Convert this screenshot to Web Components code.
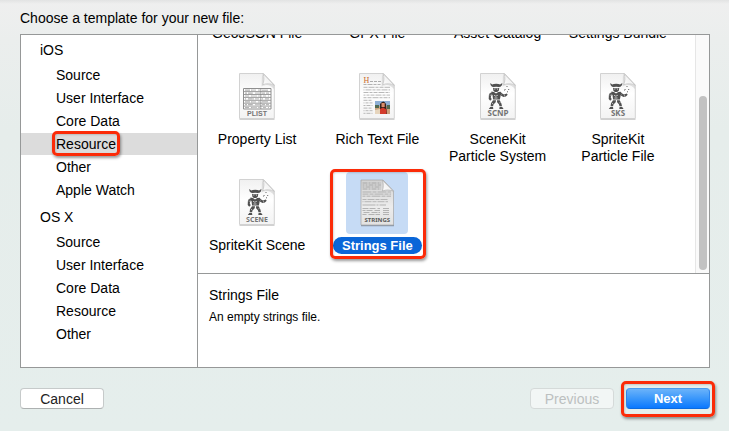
<!DOCTYPE html>
<html lang="en">
<head>
<meta charset="utf-8">
<title>Choose a template</title>
<style>
  html, body { margin: 0; height: 100%; }
  body { font: 14px/16px "Liberation Sans", Arial, sans-serif; color: #000; }
</style>
</head>
<body>
<template-dialog></template-dialog>
<script>
const define = (name, html, setup) => {
  const template = document.createElement('template');
  template.innerHTML = html;
  customElements.define(name, class extends HTMLElement {
    constructor() {
      super();
      this.attachShadow({ mode: 'open' }).append(template.content.cloneNode(true));
    }
    connectedCallback() { if (setup) setup(this, this.shadowRoot); }
  });
};

/* Red callout frame around whatever is slotted in; --reach sets how far it extends. */
define('call-out', `
<style>
  :host { display: inline-block; position: relative; }
  :host::after { content: ""; position: absolute; inset: var(--reach, -4px); border: 3px solid #fb2b08;
    border-radius: 5px; box-shadow: 1px 2px 3px rgba(0,0,0,.4), inset 1px 1px 2px rgba(0,0,0,.15); pointer-events: none; }
</style><slot></slot>`);

define('push-button', `
<style>
  :host { display: block; }
  button { display: block; min-width: 84px; height: 21px; margin: 0; padding: 0 12px; font: inherit; line-height: 18px;
    color: #222; background: #fff; border: 1px solid #c6caca; border-bottom-color: #adb1b1; border-radius: 4px; }
  button:disabled { color: #bcc0c0; background: #f2f6f5; border-color: #d5dad9; }
  :host([primary]) button { color: #fff; font-size: 13px; font-weight: bold; background: linear-gradient(#6bb3fa, #3a97fb 50%, #0a78ff); border-color: #4b9bee #2c85ee #0b6be0; }
</style>
<button type="button"><slot></slot></button>`, (host, root) => {
  root.querySelector('button').disabled = host.hasAttribute('disabled');
});

define('side-group', `
<style>
  :host { display: flex; flex-direction: column; gap: 3px; }
  h2 { margin: 0; padding-left: 19px; font: inherit; line-height: 22px; }
  nav { display: flex; flex-direction: column; gap: 1px; }
</style>
<h2></h2><nav><slot></slot></nav>`, (host, root) => {
  root.querySelector('h2').textContent = host.getAttribute('heading');
});

define('side-item', `
<style>
  :host { display: block; padding-left: 35px; line-height: 22px; }
  :host([selected]) { background: #dcdcdc; }
  a { color: inherit; text-decoration: none; }
</style>
<a href="#"><slot></slot></a>`);

const defs = `<defs>
  <linearGradient id="paper" x1="0" y1="0" x2="0" y2="1"><stop offset="0" stop-color="#f0f0f0"/><stop offset=".45" stop-color="#fff"/><stop offset="1" stop-color="#f3f3f3"/></linearGradient>
  <linearGradient id="fold" x1="0" y1="1" x2="1" y2="0"><stop offset="0" stop-color="#fff"/><stop offset=".5" stop-color="#f2f2f2"/><stop offset="1" stop-color="#ccc"/></linearGradient>
  <linearGradient id="grey" x1="0" y1="0" x2="0" y2="1"><stop offset="0" stop-color="#d2d2d2"/><stop offset=".6" stop-color="#ececec"/><stop offset="1" stop-color="#e2e2e2"/></linearGradient>
</defs>`;
const page = () => `
  <path d="M9.5 54.4H44.5" stroke="#000" stroke-opacity=".18" stroke-width="1.4"/>
  <path d="M9.5 8.5H33.500L44.300 20V53.500H9.500Z" fill="url(#paper)" stroke="#d2d2d2"/>
  <path d="M32 9C34 12 34 17 32.500 20.500C36 18.500 40 18.500 44 20.500L44 24C40 19.500 36 19 31.500 21.500Z" fill="#000" opacity=".1"/>
  <path d="M33 8.500C34.300 12 34.200 16.500 32.600 19.800C36 18.300 40.500 18.500 44.300 20.300Z" fill="url(#fold)" stroke="#c2c2c2" stroke-width=".8"/>`;
const caption = (text, size = 7, family = "'Noto Sans'") =>
  `<text x="27" y="51" text-anchor="middle" font-family="${family}, sans-serif" font-size="${size}" font-weight="700" fill="#747474">${text}</text>`;
const robot = `
  <g fill="#505050">
    <path d="M19.300 18l1.900 1.600q1.300-.9 4-.9t3.900.7l2.200-1.400q.4 2.600-1.800 3.700l-1.700.4q-2.700-.9-5 0l-1.800-.4q-2-1.200-1.700-3.700z"/>
    <path d="M22 22.700l1.500.6h3.400l1.400-.6-.5 3-1.600 1.300h-2.300l-1.500-1.300z"/>
    <path d="M20.500 26.500l2.500.5 2 1.500 2.200-1.500 2.400-.3 1.600 2-1.500 1.500-.8 4.300h-6.800l-.6-4.500-1.600-1z"/>
    <path d="M19.200 27.500l1.500 2-1 2.800 1 2-1.500 1.500-1.500-1.700.2-4.300z"/>
    <path d="M30.700 28.300l2.300 1.200 2.800-.9.900 1.100-1.800 1.900-2.200.4-2.700-1.300z"/>
    <path d="M22 35.200h3l-.3 2-2.200 2.300-.4 1.800h-2.500l.4-3z"/>
    <path d="M26 35.200h2.700l1.700 3.300.6 2.800h-2.500l-.6-2-1.800-2z"/>
    <path d="M19.300 42l2.700.1.300 1.900h-4.500zM28.600 42h2.600l1.400 2h-4.300z"/>
  </g>
  <path d="M23.300 24.200h1M26 24.200h1M23 30.300l1.800.9 2-.9M23.500 33h3M21 38.300l1.200.6M28.500 37.800l1-.5M18.600 30l1 .3M33 30.700l1 .2" stroke="#e2e2e2" stroke-width=".8"/>
  <path d="M33.500 25.500l.8-1.500M35.500 21.500h1M37.200 24.500h1M36 27l1-.4" stroke="#666" stroke-width="1"/>`;
const lines = (x1, x2, y, n, step, attrs) =>
  Array.from({ length: n }, (_, i) => `<path d="M${x1} ${y + i * step}H${x2}" ${attrs} stroke-dashoffset="${i * 3}"/>`).join('');
const art = {
  none: '',
  plist: page() + `<path d="M13.500 23.500H41V44H13.500Z" fill="#fff" stroke="#8f8f8f"/>` +
    lines(15, 22, 25.200, 7, 2.9, 'stroke="#b5b5b5" stroke-width="1.200" stroke-dasharray="5 1 4 2"') +
    lines(22, 30, 25.200, 7, 2.9, 'stroke="#c6c6c6" stroke-width="1.200" stroke-dasharray="4 2 5 1"') +
    lines(32, 39, 25.200, 7, 2.9, 'stroke="#bbb" stroke-width="1.200" stroke-dasharray="6 1 3 2"') +
    lines(14, 41, 26.600, 6, 2.9, 'stroke="#929292" stroke-width=".9"') +
    `<path d="M30.800 23.500V44" stroke="#888" stroke-width=".8"/>` + caption('PLIST', 7, "'Liberation Sans'"),
  rtf: page() + `<text x="13.500" y="17.500" font-family="'Liberation Serif', serif" font-size="8" fill="#c96b2c">H</text>
    <path d="M20 16.500H31" stroke="#999" stroke-width=".8" stroke-dasharray="3 1"/>` +
    lines(13.5, 30.5, 19.500, 1, 2, 'stroke="#aaa" stroke-width=".9" stroke-dasharray="3 1 5 1"') +
    lines(13.5, 40, 22.300, 5, 2.6, 'stroke="#b0b0b0" stroke-width=".9" stroke-dasharray="4 1 6 1 3 1"') +
    lines(13.5, 22.5, 35.300, 6, 2.6, 'stroke="#b0b0b0" stroke-width=".9" stroke-dasharray="4 1 3 1"') + `
    <path d="M25 36H40V49H25Z" fill="#cba27e"/><path d="M25 36H40V41H25Z" fill="#8eafd5"/><path d="M25 40h4v3h-4zM37 40h3v4h-3z" fill="#506a51"/>
    <path d="M30 39q3.500-5 6 0l1 10h-7z" fill="#35231f"/><path d="M31.500 38h3.200v4h-3.200z" fill="#d98d6c"/><path d="M30 44l3-1.500 3.500 2v4.500H30z" fill="#d33b2b"/><path d="M25 45l5-1v5h-5z" fill="#e6d5bd"/>`,
  scnp: page() + robot + caption('SCNP', 8),
  sks: page() + robot + caption('SKS', 8),
  scene: page() + robot + caption('SCENE'),
  strings: `<path d="M11 54.500H44" stroke="#000" stroke-opacity=".3" stroke-width="1.300"/>
    <path d="M11 9H33L43.500 20V54H11Z" fill="url(#grey)" stroke="#a5a5a5" stroke-width=".7"/>` +
    lines(12.5, 31, 12, 4, 2, 'stroke="#999" stroke-width=".8" stroke-dasharray="5 1 2 1"') +
    lines(12.5, 41, 21, 3, 2.100, 'stroke="#a5a5a5" stroke-width=".8" stroke-dasharray="9 1 4 1"') +
    lines(12.5, 38, 28.500, 2, 2.200, 'stroke="#aaa" stroke-width=".8" stroke-dasharray="4 1 7 1"') +
    lines(12.5, 36, 34, 1, 2, 'stroke="#a5a5a5" stroke-width=".8" stroke-dasharray="13 1 2 1"') +
    lines(12.5, 30, 37.500, 4, 2, 'stroke="#a5a5a5" stroke-width=".8" stroke-dasharray="6 1 6 2"') +
    lines(33, 39, 37.500, 4, 2, 'stroke="#a5a5a5" stroke-width=".8"') +
    `<path d="M32.500 9.200C33.500 13 33.500 16.500 32.400 20C36 18.500 40 18.800 43.500 20.200Z" fill="url(#fold)" stroke="#aaa" stroke-width=".7"/>
    <text x="27.300" y="51" text-anchor="middle" font-family="'Noto Sans', sans-serif" font-size="6" font-weight="700" fill="#5a5a5a">STRINGS</text>`
};

define('template-tile', `
<style>
  :host { display: flex; flex-direction: column; align-items: center; gap: 3px; text-align: center; }
  figure { margin: 0; width: 62px; height: 62px; border-radius: 4px; }
  svg { display: block; width: 100%; height: 100%; }
  span { display: block; padding: 0 9px; border-radius: 9px; line-height: 17px; margin-bottom: -1px; white-space: nowrap; }
  ::slotted(b) { display: block; font-weight: inherit; line-height: 16px; }
  :host([selected]) figure { background: #c6dbf5; }
  :host([selected]) span { color: #fff; background: #0a66d8; font-size: 13px; font-weight: bold; }
</style>
<figure></figure><span><slot></slot></span>`, (host, root) => {
  root.querySelector('figure').innerHTML =
    `<svg viewBox="-4 1 62 62" fill="none" aria-hidden="true">${defs}${art[host.getAttribute('icon')]}</svg>`;
});

define('template-grid', `
<style>
  :host { display: flex; min-height: 0; overflow: hidden; background: #fff; }
  .view { flex: 1; min-width: 0; display: flex; flex-direction: column; justify-content: flex-end; }
  .grid { display: grid; grid-template-columns: repeat(4, 1fr); grid-auto-rows: 99px; gap: 7px 2px; padding-right: 18px; padding-bottom: 2px; }
  .track { width: 13px; display: flex; flex-direction: column; align-items: center; background: #fafafa; border-left: 1px solid #e6e6e6; }
  .space { flex: 61; }
  .thumb { flex: 174; width: 8px; margin-bottom: 3px; border-radius: 4px; background: #c2c2c2; }
</style>
<div class="view"><div class="grid"><slot></slot></div></div>
<div class="track"><div class="space"></div><div class="thumb"></div></div>`);

define('template-dialog', `
<style>
  :host { display: flex; flex-direction: column; box-sizing: border-box; min-height: 100vh; padding: 10px 19px 22px 20px;
    background: linear-gradient(#e2e3e3, transparent 4px), linear-gradient(#efefef, #ebeeed 40px, #e6edeb 130px, #e5eeec); }
  h1 { margin: 0 0 8px; font: inherit; }
  .panel { flex: 1; display: grid; grid-template-columns: 177px 1fr; border: 1px solid #969898; background: #fff; }
  aside { display: flex; flex-direction: column; gap: 5px; padding-top: 4px; border-right: 1px solid #969898; }
  .main { display: grid; grid-template-rows: minmax(0, 238px) 1fr; min-width: 0; }
  .detail { padding: 13px 11px; border-top: 1px solid #969898; }
  h2 { margin: 0 0 6px; font: inherit; }
  p { margin: 0; font-size: 12px; }
  footer { display: flex; gap: 12px; margin-top: 20px; }
  .grow { flex: 1; }
  .row-mark { line-height: 17px; --reach: -5px -4px -3px; }
  .tile-mark { justify-self: center; align-self: start; --reach: -3px -4px -6px -3px; }
  .button-mark { --reach: -7px -5px -8px -5px; }
</style>
<h1>Choose a template for your new file:</h1>
<div class="panel">
  <aside>
    <side-group heading="iOS">
      <side-item>Source</side-item><side-item>User Interface</side-item><side-item>Core Data</side-item>
      <side-item selected><call-out class="row-mark">Resource</call-out></side-item>
      <side-item>Other</side-item><side-item>Apple Watch</side-item>
    </side-group>
    <side-group heading="OS X">
      <side-item>Source</side-item><side-item>User Interface</side-item><side-item>Core Data</side-item>
      <side-item>Resource</side-item><side-item>Other</side-item>
    </side-group>
  </aside>
  <div class="main">
    <template-grid>
      <template-tile icon="none">GeoJSON File</template-tile>
      <template-tile icon="none">GPX File</template-tile>
      <template-tile icon="none">Asset Catalog</template-tile>
      <template-tile icon="none">Settings Bundle</template-tile>
      <template-tile icon="plist">Property List</template-tile>
      <template-tile icon="rtf">Rich Text File</template-tile>
      <template-tile icon="scnp">SceneKit<br>Particle System</template-tile>
      <template-tile icon="sks">SpriteKit<br>Particle File</template-tile>
      <template-tile icon="scene">SpriteKit Scene</template-tile>
      <call-out class="tile-mark"><template-tile icon="strings" selected>Strings File</template-tile></call-out>
    </template-grid>
    <div class="detail"><h2>Strings File</h2><p>An empty strings file.</p></div>
  </div>
</div>
<footer>
  <push-button>Cancel</push-button><span class="grow"></span>
  <push-button disabled>Previous</push-button>
  <call-out class="button-mark"><push-button primary>Next</push-button></call-out>
</footer>`);
</script>
</body>
</html>
